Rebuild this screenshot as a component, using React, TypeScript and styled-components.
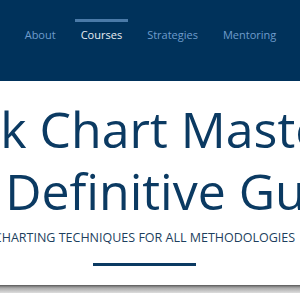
import React from "react";
import styled, { createGlobalStyle } from "styled-components";

const GlobalStyle = createGlobalStyle`
    html, body {
        margin: 0;
        padding: 0;
        background: #ffffff;
        overflow: hidden;
    }
    body {
        font-family: "Open Sans", "Noto Sans", sans-serif;
    }
`;

const navItems = ["About", "Courses", "Strategies", "Mentoring"];

function App(): React.ReactElement {
    return (
        <Page>
            <GlobalStyle />
            <Header>
                <Nav>
                    {navItems.map((item) => (
                        <NavItem key={item} $active={item === "Courses"}>
                            {item}
                        </NavItem>
                    ))}
                </Nav>
            </Header>
            <Hero>
                <Title>
                    <TitleLine>Stock Chart Mastery:</TitleLine>
                    <TitleLine>The Definitive Guide</TitleLine>
                </Title>
                <Subtitle>Charting Techniques for All Methodologies</Subtitle>
                <Divider />
            </Hero>
            <Shadow />
        </Page>
    );
}

const Page = styled.div`
    width: 300px;
    height: 293px;
    display: flex;
    flex-direction: column;
    overflow: hidden;
`;

const Header = styled.header`
    height: 81px;
    flex-shrink: 0;
    background-color: #00325b;
    display: flex;
    justify-content: center;
`;

const Nav = styled.nav`
    display: flex;
    gap: 13px;
    padding-top: 19px;
    padding-left: 1px;
`;

const NavItem = styled.a<{ $active?: boolean }>`
    display: block;
    padding: 5px 6px 0;
    border-top: 3px solid ${(p) => (p.$active ? "#4a7aa8" : "transparent")};
    color: ${(p) => (p.$active ? "#e8eef4" : "#6e9ccb")};
    font-size: 11px;
    line-height: 15px;
    cursor: pointer;
`;

const Hero = styled.section`
    flex: 1;
    display: flex;
    flex-direction: column;
    align-items: center;
    padding: 17px 11px 0 0;
`;

const Title = styled.h1`
    margin: 0 6px 0 0;
    display: flex;
    flex-direction: column;
    align-items: center;
    font-weight: 400;
    font-size: 50px;
    line-height: 62px;
    color: #0b3a62;
`;

const TitleLine = styled.span`
    white-space: nowrap;
`;

const Subtitle = styled.p`
    margin: 8px 0 0;
    white-space: nowrap;
    text-transform: uppercase;
    font-size: 12.5px;
    line-height: 16px;
    color: #1d3f5e;
`;

const Divider = styled.div`
    width: 103px;
    height: 3px;
    margin-top: 17px;
    background-color: #0b3a62;
`;

const Shadow = styled.div`
    height: 8px;
    flex-shrink: 0;
    background: linear-gradient(#555 0, #777 1px, #aaa 3px, #ddd 8px);
`;

export default App;
